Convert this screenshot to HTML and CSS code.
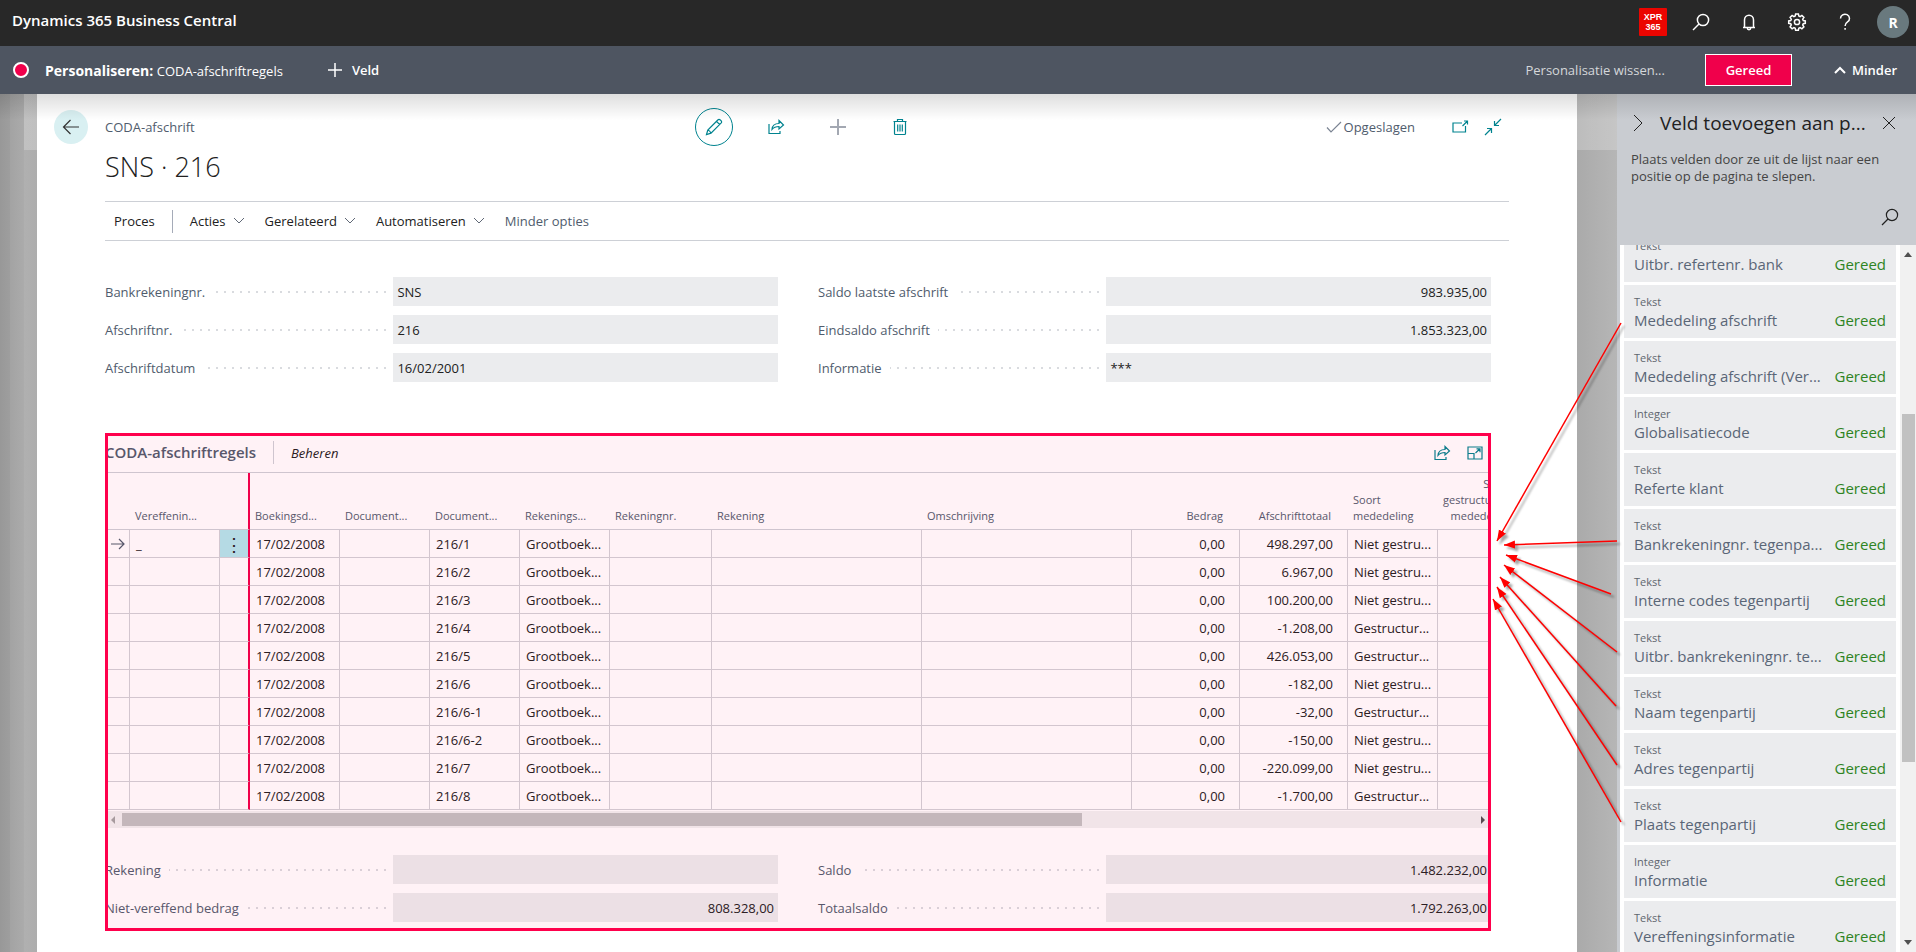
FILE: index.html
```html
<!DOCTYPE html>
<html lang="nl">
  <head>
    <meta charset="UTF-8" />
    <meta name="viewport" content="width=device-width, initial-scale=1.0" />
    <title>CODA-afschrift - Dynamics 365 Business Central</title>
    <link rel="stylesheet" href="styles.css" />
  </head>
  <body>
    <header class="topbar">
      <a class="brand" href="#">Dynamics 365 Business Central</a>
      <nav class="top-actions">
        <span class="env">XPR<br />365</span>
        <button class="top-btn" aria-label="Zoeken">
          <svg width="20" height="20" viewBox="0 0 20 20"><circle cx="12" cy="8" r="5.6" /><path d="M8 12L2 18" /></svg>
        </button>
        <button class="top-btn" aria-label="Meldingen">
          <svg width="20" height="20" viewBox="0 0 20 20"><path d="M4 15.500H16M5.500 15.500V8a4.500 4.800 0 0 1 9 0V15.500M8.300 16a1.700 1.700 0 0 0 3.400 0" /></svg>
        </button>
        <button class="top-btn" aria-label="Instellingen">
          <svg width="20" height="20" viewBox="0 0 20 20"><circle cx="10" cy="10" r="2.600" /><path d="M8.600 2h2.800l.4 2 1.300.6 1.800-1.200 2 2-1.200 1.800.6 1.300 2 .4v2.400l-2 .4-.6 1.300 1.200 1.800-2 2-1.800-1.200-1.300.6-.4 2H8.600l-.4-2-1.300-.6-1.800 1.200-2-2 1.200-1.800-.6-1.300-2-.4V8.900l2-.4.6-1.300-1.200-1.800 2-2 1.800 1.200 1.300-.6z" /></svg>
        </button>
        <button class="top-btn" aria-label="Help">
          <svg width="20" height="20" viewBox="0 0 20 20"><path d="M5.500 6.500a4.500 4.200 0 1 1 7 3.400c-1.700 1.200-2.400 1.900-2.400 4M10.100 16v1.800" /></svg>
        </button>
        <button class="avatar">R</button>
      </nav>
    </header>

    <div class="personalize">
      <span class="rec"></span>
      <span class="mode"><b>Personaliseren:</b> CODA-afschriftregels</span>
      <button class="bar-btn add-field">
        <svg width="16" height="16" viewBox="0 0 16 16"><path d="M8 1V15M1 8H15" /></svg>
        Veld
      </button>
      <button class="bar-btn clear">Personalisatie wissen...</button>
      <button class="done">Gereed</button>
      <button class="bar-btn less">
        <svg width="12" height="12" viewBox="0 0 12 12"><path d="M1 9L6 4L11 9" stroke-width="2" /></svg>
        Minder
      </button>
    </div>

    <div class="workspace">
      <main class="page">
        <div class="page-head">
          <div class="crumb">
            <button class="back" aria-label="Terug">
              <svg width="18" height="18" viewBox="0 0 18 18"><path d="M17 9H1.500M8.500 2L1.500 9L8.500 16" /></svg>
            </button>
            <span>CODA-afschrift</span>
          </div>
          <div class="tools">
            <button class="tool" aria-label="Bewerken">
              <span class="ring">
                <svg width="18" height="18" viewBox="0 0 18 18"><path d="M1.500 16.500L2.800 12L12.800 2q1.200-1.200 2.500 0l.7.7q1.200 1.200 0 2.500L6 15.200zM2.800 12Q5 12.500 6 15.200M11.500 3.300L14.700 6.500" /></svg>
              </span>
            </button>
            <button class="tool" aria-label="Delen">
              <svg width="18" height="18" viewBox="0 0 18 18"><path d="M2 6V15.500H13V13M5 11.500C5.300 7 8 5.500 12 5.500V2.500L16.500 7L12 11V8.500C9 8.500 7 9 5 11.500Z" /></svg>
            </button>
            <button class="tool plus" aria-label="Nieuw">
              <svg width="18" height="18" viewBox="0 0 18 18"><path d="M9 1V17M1 9H17" /></svg>
            </button>
            <button class="tool" aria-label="Verwijderen">
              <svg width="18" height="18" viewBox="0 0 18 18"><path d="M3.500 3.500V15.500q0 1 1 1h9q1 0 1-1V3.500M2.500 3.500H15.500M6.500 3.500V1.500H11.500V3.500M6.700 6.500V13.500M9 6.500V13.500M11.300 6.500V13.500" /></svg>
            </button>
          </div>
          <div class="state">
            <svg class="check" width="16" height="14" viewBox="0 0 16 14"><path d="M1 7.500L5 12L15 2" /></svg>
            <span>Opgeslagen</span>
            <button class="win" aria-label="Openen in nieuw venster">
              <svg width="18" height="18" viewBox="0 0 18 18"><path d="M11 5H2V14H14.500V8M11.500 8L16.500 3M13 3H16.500V6.500" /></svg>
            </button>
            <button class="win" aria-label="Versmallen">
              <svg width="18" height="18" viewBox="0 0 18 18"><path d="M17 1L10.500 7.500M10.500 3V7.500H15M1 17L7.500 10.500M3 10.500H7.500V15" /></svg>
            </button>
          </div>
        </div>

        <h1>SNS · 216</h1>

        <nav class="ribbon">
          <button class="menu first">Proces</button>
          <button class="menu">Acties <svg width="12" height="8" viewBox="0 0 12 8"><path d="M1 1L6 6L11 1" /></svg></button>
          <button class="menu">Gerelateerd <svg width="12" height="8" viewBox="0 0 12 8"><path d="M1 1L6 6L11 1" /></svg></button>
          <button class="menu">Automatiseren <svg width="12" height="8" viewBox="0 0 12 8"><path d="M1 1L6 6L11 1" /></svg></button>
          <button class="menu fewer">Minder opties</button>
        </nav>

        <section class="fields general">
          <div class="field"><label for="bank">Bankrekeningnr.</label><i class="dots"></i><input id="bank" value="SNS" readonly /></div>
          <div class="field"><label for="last">Saldo laatste afschrift</label><i class="dots"></i><input id="last" class="num" value="983.935,00" readonly /></div>
          <div class="field"><label for="no">Afschriftnr.</label><i class="dots"></i><input id="no" value="216" readonly /></div>
          <div class="field"><label for="end">Eindsaldo afschrift</label><i class="dots"></i><input id="end" class="num" value="1.853.323,00" readonly /></div>
          <div class="field"><label for="date">Afschriftdatum</label><i class="dots"></i><input id="date" value="16/02/2001" readonly /></div>
          <div class="field"><label for="info">Informatie</label><i class="dots"></i><input id="info" value="***" readonly /></div>
        </section>

        <section class="lines">
          <div class="lines-head">
            <h2>CODA-afschriftregels</h2>
            <button class="manage">Beheren</button>
            <button class="win" aria-label="Delen">
              <svg width="18" height="18" viewBox="0 0 18 18"><path d="M2 6V15.500H13V13M5 11.500C5.300 7 8 5.500 12 5.500V2.500L16.500 7L12 11V8.500C9 8.500 7 9 5 11.500Z" /></svg>
            </button>
            <button class="win" aria-label="Focusmodus">
              <svg width="18" height="18" viewBox="0 0 18 18"><path d="M2 3H16V15H2ZM2 9.500H8V15M9.500 9L14 4.800M10.500 4.800H14V8.300" /></svg>
            </button>
          </div>
          <div class="grid">
            <table>
              <colgroup>
                <col class="c-arrow" /><col class="c-code" /><col class="c-more" /><col class="c-code" /><col class="c-code" /><col class="c-code" /><col class="c-code" />
                <col class="c-acc" /><col class="c-text" /><col class="c-text" /><col class="c-num" /><col class="c-num" /><col class="c-code" /><col class="c-code" />
              </colgroup>
              <thead>
                <tr>
                  <th></th>
                  <th>Vereffenin...</th>
                  <th class="freeze"></th>
                  <th>Boekingsd...</th>
                  <th>Document...</th>
                  <th>Document...</th>
                  <th>Rekenings...</th>
                  <th>Rekeningnr.</th>
                  <th>Rekening</th>
                  <th>Omschrijving</th>
                  <th class="num">Bedrag</th>
                  <th class="num">Afschrifttotaal</th>
                  <th>Soort<br />mededeling</th>
                  <th class="num">Soort<br />gestructureerd<br />mededeling</th>
                </tr>
              </thead>
              <tbody>
                <tr><td class="current"><svg width="14" height="12" viewBox="0 0 14 12"><path d="M0 6H13M8 1L13 6L8 11" /></svg></td><td>_</td><td class="freeze more"><button aria-label="Meer opties">⋮</button></td><td>17/02/2008</td><td></td><td>216/1</td><td>Grootboek...</td><td></td><td></td><td></td><td class="num">0,00</td><td class="num">498.297,00</td><td>Niet gestru...</td><td></td></tr>
                <tr><td></td><td></td><td class="freeze"></td><td>17/02/2008</td><td></td><td>216/2</td><td>Grootboek...</td><td></td><td></td><td></td><td class="num">0,00</td><td class="num">6.967,00</td><td>Niet gestru...</td><td></td></tr>
                <tr><td></td><td></td><td class="freeze"></td><td>17/02/2008</td><td></td><td>216/3</td><td>Grootboek...</td><td></td><td></td><td></td><td class="num">0,00</td><td class="num">100.200,00</td><td>Niet gestru...</td><td></td></tr>
                <tr><td></td><td></td><td class="freeze"></td><td>17/02/2008</td><td></td><td>216/4</td><td>Grootboek...</td><td></td><td></td><td></td><td class="num">0,00</td><td class="num">-1.208,00</td><td>Gestructur...</td><td></td></tr>
                <tr><td></td><td></td><td class="freeze"></td><td>17/02/2008</td><td></td><td>216/5</td><td>Grootboek...</td><td></td><td></td><td></td><td class="num">0,00</td><td class="num">426.053,00</td><td>Gestructur...</td><td></td></tr>
                <tr><td></td><td></td><td class="freeze"></td><td>17/02/2008</td><td></td><td>216/6</td><td>Grootboek...</td><td></td><td></td><td></td><td class="num">0,00</td><td class="num">-182,00</td><td>Niet gestru...</td><td></td></tr>
                <tr><td></td><td></td><td class="freeze"></td><td>17/02/2008</td><td></td><td>216/6-1</td><td>Grootboek...</td><td></td><td></td><td></td><td class="num">0,00</td><td class="num">-32,00</td><td>Gestructur...</td><td></td></tr>
                <tr><td></td><td></td><td class="freeze"></td><td>17/02/2008</td><td></td><td>216/6-2</td><td>Grootboek...</td><td></td><td></td><td></td><td class="num">0,00</td><td class="num">-150,00</td><td>Niet gestru...</td><td></td></tr>
                <tr><td></td><td></td><td class="freeze"></td><td>17/02/2008</td><td></td><td>216/7</td><td>Grootboek...</td><td></td><td></td><td></td><td class="num">0,00</td><td class="num">-220.099,00</td><td>Niet gestru...</td><td></td></tr>
                <tr><td></td><td></td><td class="freeze"></td><td>17/02/2008</td><td></td><td>216/8</td><td>Grootboek...</td><td></td><td></td><td></td><td class="num">0,00</td><td class="num">-1.700,00</td><td>Gestructur...</td><td></td></tr>
              </tbody>
            </table>
          </div>
          <div class="hscroll">
            <svg class="dim" width="6" height="8" viewBox="0 0 6 8"><path d="M5 0V8L1 4Z" /></svg>
            <div class="htrack"><div class="hthumb"></div></div>
            <svg width="6" height="8" viewBox="0 0 6 8"><path d="M1 0V8L5 4Z" /></svg>
          </div>
          <div class="fields totals">
            <div class="field"><label for="acc">Rekening</label><i class="dots"></i><input id="acc" value="" readonly /></div>
            <div class="field"><label for="bal">Saldo</label><i class="dots"></i><input id="bal" class="num" value="1.482.232,00" readonly /></div>
            <div class="field"><label for="open">Niet-vereffend bedrag</label><i class="dots"></i><input id="open" class="num" value="808.328,00" readonly /></div>
            <div class="field"><label for="total">Totaalsaldo</label><i class="dots"></i><input id="total" class="num" value="1.792.263,00" readonly /></div>
          </div>
        </section>
      </main>

      <aside class="panel">
        <div class="panel-head">
          <div class="panel-title">
            <button aria-label="Inklappen"><svg width="10" height="18" viewBox="0 0 10 18"><path d="M1 1L9 9L1 17" /></svg></button>
            <h2>Veld toevoegen aan p...</h2>
            <button aria-label="Sluiten"><svg width="14" height="14" viewBox="0 0 14 14"><path d="M1 1L13 13M13 1L1 13" /></svg></button>
          </div>
          <p>Plaats velden door ze uit de lijst naar een positie op de pagina te slepen.</p>
          <button class="panel-search" aria-label="Zoeken"><svg width="20" height="20" viewBox="0 0 20 20"><circle cx="12" cy="8" r="5.600" /><path d="M8 12L2 18" /></svg></button>
        </div>
        <div class="panel-body">
          <ul>
            <li><small>Tekst</small><span>Uitbr. refertenr. bank</span><em>Gereed</em></li>
            <li><small>Tekst</small><span>Mededeling afschrift</span><em>Gereed</em></li>
            <li><small>Tekst</small><span>Mededeling afschrift (Ver...</span><em>Gereed</em></li>
            <li><small>Integer</small><span>Globalisatiecode</span><em>Gereed</em></li>
            <li><small>Tekst</small><span>Referte klant</span><em>Gereed</em></li>
            <li><small>Tekst</small><span>Bankrekeningnr. tegenpa...</span><em>Gereed</em></li>
            <li><small>Tekst</small><span>Interne codes tegenpartij</span><em>Gereed</em></li>
            <li><small>Tekst</small><span>Uitbr. bankrekeningnr. te...</span><em>Gereed</em></li>
            <li><small>Tekst</small><span>Naam tegenpartij</span><em>Gereed</em></li>
            <li><small>Tekst</small><span>Adres tegenpartij</span><em>Gereed</em></li>
            <li><small>Tekst</small><span>Plaats tegenpartij</span><em>Gereed</em></li>
            <li><small>Integer</small><span>Informatie</span><em>Gereed</em></li>
            <li><small>Tekst</small><span>Vereffeningsinformatie</span><em>Gereed</em></li>
          </ul>
          <div class="vscroll">
            <svg width="8" height="5" viewBox="0 0 8 5"><path d="M0 5H8L4 0Z" /></svg>
            <div class="vtrack"><div class="vthumb"></div></div>
            <svg width="8" height="5" viewBox="0 0 8 5"><path d="M0 0H8L4 5Z" /></svg>
          </div>
        </div>
      </aside>

      <!-- arrows from the panel fields to the repeater -->
      <svg class="arrows" width="150" height="540" viewBox="1486 300 150 540">
        <defs>
          <marker id="head" markerUnits="userSpaceOnUse" markerWidth="12" markerHeight="10" refX="11" refY="5" orient="auto">
            <path d="M0 1L11 5L0 9Z" />
          </marker>
        </defs>
        <path d="M1621 323L1497 541" />
        <path d="M1617 541L1504 545" />
        <path d="M1611 594L1506 555" />
        <path d="M1617 652L1504 565" />
        <path d="M1616 706L1500 577" />
        <path d="M1617 765L1497 587" />
        <path d="M1621 822L1493 599" />
      </svg>
    </div>
  </body>
</html>
```
FILE: styles.css
```css
* {
  box-sizing: border-box;
}

body {
  margin: 0;
  height: 100vh;
  display: flex;
  flex-direction: column;
  overflow: hidden;
  font-family: "Open Sans", "Noto Sans", sans-serif;
  font-size: 13px;
  color: #212121;
}

button {
  padding: 0;
  border: none;
  background: none;
  font: inherit;
  color: inherit;
  cursor: pointer;
}

svg {
  display: block;
  flex: none;
  fill: none;
  stroke: currentColor;
  stroke-width: 1.2;
}

h1,
h2,
p,
ul {
  margin: 0;
  padding: 0;
}

/* top bars */
.topbar {
  flex: none;
  height: 46px;
  padding: 0 7px 2px 12px;
  display: flex;
  justify-content: space-between;
  background-color: #282828;
  color: #fff;
}

.brand {
  line-height: 40px;
  font-size: 15px;
  font-weight: 600;
  color: #fff;
  text-decoration: none;
}

.top-actions {
  display: flex;
  align-items: center;
}

.env {
  width: 28px;
  height: 28px;
  margin-right: 10px;
  padding-top: 4px;
  background-color: #eb0500;
  border-radius: 1px;
  font-family: "Liberation Sans", sans-serif;
  font-size: 9px;
  font-weight: 700;
  line-height: 10px;
  text-align: center;
}

.top-btn {
  width: 48px;
  display: flex;
  justify-content: center;
}

.top-btn svg {
  stroke-width: 1.5;
}

.avatar {
  width: 32px;
  height: 32px;
  margin-left: 8px;
  border-radius: 50%;
  background-color: #69797e;
  font-size: 14px;
  font-weight: 700;
}

.personalize {
  flex: none;
  height: 48px;
  padding: 0 19px 0 13px;
  display: flex;
  align-items: center;
  background-color: #4e5561;
  color: #fff;
}

.rec {
  width: 16px;
  height: 16px;
  margin-right: 16px;
  border: 2px solid #fff;
  border-radius: 50%;
  background-color: #f0004b;
}

.mode b {
  font-size: 14px;
}

.bar-btn {
  display: flex;
  align-items: center;
  gap: 9px;
  font-weight: 600;
}

.bar-btn svg {
  stroke-width: 1.5;
}

.add-field {
  margin-left: 44px;
}

.clear {
  margin-left: auto;
  font-weight: 400;
  color: #d5d7da;
}

.done {
  width: 87px;
  height: 32px;
  margin: 0 42px 0 40px;
  border: 1px solid #fff;
  background-color: #f0004b;
  font-weight: 600;
}

.less {
  gap: 6px;
}

/* workspace */
.workspace {
  position: relative;
  flex: 1;
  min-height: 0;
  display: flex;
  background:
    linear-gradient(90deg, transparent 24px, rgba(255, 255, 255, 0.22) 24px) top / 100% 56px no-repeat,
    linear-gradient(90deg, #989898 0, #9e9e9e 10px, #a3a3a3 10px, #ababab 24px, #b0b0b0 24px, #adadad 37px, #aaa 1577px, #b6b6b6 1617px);
}

.workspace::after {
  content: "";
  position: absolute;
  top: 0;
  left: 0;
  right: 0;
  height: 26px;
  background: linear-gradient(rgba(0, 0, 0, 0.13), rgba(0, 0, 0, 0));
  pointer-events: none;
}

.page {
  flex: 1;
  min-width: 0;
  margin: 0 40px 0 37px;
  padding: 14px 68px 0;
  background-color: #fff;
}

.page-head {
  height: 38px;
  display: grid;
  grid-template-columns: 1fr auto 1fr;
  align-items: center;
}

.crumb {
  display: flex;
  align-items: center;
  gap: 17px;
  margin-left: -51px;
  color: #505c6d;
}

.back {
  width: 34px;
  height: 34px;
  display: flex;
  align-items: center;
  justify-content: center;
  border-radius: 50%;
  background-color: #d9f0f2;
  color: #333;
}

.tools {
  display: flex;
  color: #00838f;
}

.tool {
  width: 62px;
  height: 38px;
  display: flex;
  align-items: center;
  justify-content: center;
}

.ring {
  width: 38px;
  height: 38px;
  display: flex;
  align-items: center;
  justify-content: center;
  border: 1px solid #00838f;
  border-radius: 50%;
}

.plus {
  color: #a3a8b2;
}

.plus svg {
  stroke-width: 2;
}

.state {
  display: flex;
  align-items: center;
  justify-content: flex-end;
  padding-right: 7px;
  color: #505c6d;
}

.check {
  margin-right: 2px;
  color: #7b8493;
}

.win {
  color: #00838f;
}

.state .win {
  margin-left: 15px;
}

.state span + .win {
  margin-left: 36px;
}

h1 {
  margin-top: 2px;
  font-size: 27px;
  font-weight: 300;
  line-height: 38px;
}

.ribbon {
  height: 40px;
  margin-top: 15px;
  padding-left: 9px;
  display: flex;
  align-items: center;
  border-top: 1px solid #cdd0d6;
  border-bottom: 1px solid #cdd0d6;
}

.menu {
  display: flex;
  align-items: center;
  gap: 7px;
  margin-right: 20px;
}

.menu svg {
  stroke-width: 1;
  color: #606876;
}

.menu.first {
  height: 23px;
  margin-right: 17px;
  padding-right: 17px;
  border-right: 1px solid #a5abb8;
}

.fewer {
  color: #505c6d;
}

/* label, dotted leader and value */
.fields {
  display: grid;
  grid-template-columns: 1fr 1fr;
  gap: 9px 40px;
}

.general {
  margin: 36px 18px 0 0;
}

.field {
  display: flex;
  align-items: center;
  min-width: 0;
}

.field label {
  color: #505c6d;
  white-space: nowrap;
}

.dots {
  flex: 1;
  height: 2px;
  margin: 0 7px 0 8px;
  background: repeating-linear-gradient(270deg, #d9dbdf 0, #d9dbdf 2px, transparent 2px, transparent 8px);
}

.field input {
  width: calc(57% + 1px);
  height: 29px;
  padding: 0 4px;
  border: none;
  background-color: #ebecee;
  font: inherit;
  color: #212121;
}

.num,
.field .num {
  text-align: right;
}

/* selected part */
.lines {
  position: relative;
  margin: 51px 18px 0 0;
  padding-bottom: 9px;
}

.lines::after {
  content: "";
  position: absolute;
  inset: 0;
  border: 3px solid #ff004c;
  background-color: rgba(255, 0, 76, 0.05);
  pointer-events: none;
}

.lines-head {
  height: 40px;
  padding: 0 7px 0 0;
  display: flex;
  align-items: center;
  border-bottom: 1px solid #cdd0d6;
}

.lines-head h2 {
  height: 23px;
  margin-right: 17px;
  padding-right: 17px;
  border-right: 1px solid #cdd0d6;
  font-size: 15px;
  font-weight: 600;
  line-height: 23px;
  color: #505c6d;
}

.manage {
  margin-right: auto;
  font-style: italic;
}

.lines-head .win {
  margin-left: 15px;
}

.grid {
  overflow: hidden;
}

table {
  width: 1423px;
  table-layout: fixed;
  border-collapse: separate;
  border-spacing: 0;
}

.c-arrow {
  width: 25px;
}

.c-code {
  width: 90px;
}

.c-more {
  width: 30px;
}

.c-acc {
  width: 102px;
}

.c-text {
  width: 210px;
}

.c-num {
  width: 108px;
}

th {
  height: 57px;
  padding: 0 5px 5px;
  border-bottom: 1px solid #cdd0d6;
  font-size: 11px;
  font-weight: 400;
  line-height: 16px;
  text-align: left;
  vertical-align: bottom;
  white-space: nowrap;
  color: #505c6d;
}

th.num {
  padding-right: 17px;
  text-align: right;
}

td {
  height: 28px;
  padding: 0 6px;
  border-right: 1px solid #d1d1d6;
  border-bottom: 1px solid #d1d1d6;
  line-height: 18px;
  white-space: nowrap;
}

td.num {
  padding-right: 14px;
}

.freeze {
  padding: 0;
  border-right: 2px solid #f0004b;
}

.current {
  padding: 0 0 0 6px;
  color: #505c6d;
}

.more {
  background-color: #b2e6ec;
  text-align: center;
  font-size: 18px;
}

.hscroll {
  height: 17px;
  margin-top: 1px;
  padding: 0 5px;
  display: flex;
  align-items: center;
  background-color: #f1f1f1;
}

.hscroll svg,
.vscroll svg {
  fill: #505050;
  stroke: none;
}

.hscroll .dim {
  fill: #a3a3a3;
}

.htrack {
  flex: 1;
  padding: 0 6px;
}

.hthumb {
  width: 71%;
  height: 13px;
  background-color: #c1c1c1;
}

.totals {
  margin-top: 27px;
}

/* field list */
.panel {
  flex: none;
  width: 299px;
  display: flex;
  flex-direction: column;
  background-color: #c9ccd1;
}

.panel-head {
  height: 151px;
  padding: 14px 14px 0;
}

.panel-title {
  display: flex;
  align-items: center;
  padding: 0 6px 0 2px;
}

.panel-title svg {
  stroke-width: 1;
}

.panel-title h2 {
  flex: 1;
  margin-left: 17px;
  font-size: 19px;
  font-weight: 400;
  line-height: 30px;
  white-space: nowrap;
}

.panel p {
  margin-top: 13px;
  font-size: 13px;
  line-height: 17px;
  color: #444;
}

.panel-search {
  display: block;
  margin: 22px 2px 0 auto;
}

.panel-body {
  flex: 1;
  min-height: 0;
  margin-left: 3px;
  display: flex;
  overflow: hidden;
  background-color: #fff;
}

.panel ul {
  flex: 1;
  min-width: 0;
  margin: -16px 4px 0;
  list-style: none;
}

.panel li {
  height: 53px;
  margin-bottom: 3px;
  padding: 9px 10px 0;
  display: grid;
  grid-template-columns: 1fr auto;
  grid-template-rows: 15px 22px;
  background-color: #ebecee;
}

.panel small {
  grid-column: 1 / 3;
  font-size: 11px;
  line-height: 15px;
  color: #60666e;
}

.panel span,
.panel em {
  font-size: 15px;
  font-style: normal;
  line-height: 22px;
  white-space: nowrap;
  color: #5a6677;
}

.panel em {
  color: #2e8423;
}

.vscroll {
  width: 16px;
  padding: 7px 0;
  display: flex;
  flex-direction: column;
  align-items: center;
  background-color: #f1f1f1;
}

.vtrack {
  flex: 1;
  width: 13px;
  display: flex;
  flex-direction: column;
}

.vtrack::before {
  content: "";
  height: 23%;
}

.vthumb {
  height: 51%;
  background-color: #c1c1c1;
}

.arrows {
  position: absolute;
  top: 206px;
  right: 280px;
  stroke: #f00;
  stroke-width: 1.5;
  filter: drop-shadow(3px 3px 1px rgba(0, 0, 0, 0.35));
  pointer-events: none;
}

.arrows > path {
  marker-end: url(#head);
}

.arrows marker path {
  fill: #f00;
  stroke: none;
}
```
